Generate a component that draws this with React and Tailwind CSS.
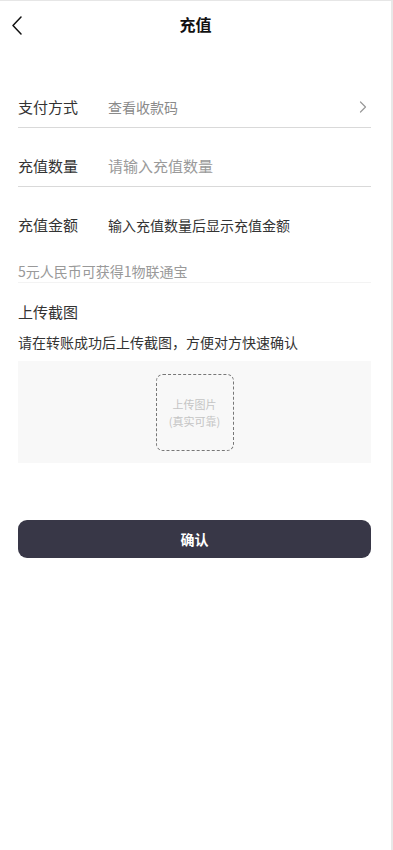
import React from "react";

const font = { fontFamily: '"Noto Sans CJK SC", "Noto Sans", sans-serif' };

function Row({ label, children, right, border = true }) {
  return (
    <div className={`flex items-center h-[20px] pt-[28px] pb-[10px] box-content leading-[20px] ${border ? "border-b border-[#d9d9d9]" : ""}`}>
      <div className="w-[90px] text-[15px] leading-[20px] text-[#333]">{label}</div>
      <div className="flex-1 leading-[20px] flex items-center">{children}</div>
      {right}
    </div>
  );
}

export default function App() {
  return (
    <div className="w-[393px] min-h-[850px] bg-white flex" style={font}>
      <div className="w-[391px] min-h-[850px] border-t border-[#e6e6e6] border-r-2 border-r-[#e8e8e8] box-content">
        <div className="h-[45px] grid grid-cols-[60px_1fr_60px] items-center">
          <div className="pl-[10px] pt-[2px] flex">
            <svg width="14" height="20" viewBox="0 0 14 20" fill="none">
              <path d="M11 2 L3 10.5 L11 19" stroke="#111" strokeWidth="1.5" strokeLinecap="round" strokeLinejoin="round" />
            </svg>
          </div>
          <div className="text-center text-[16px] font-bold text-[#111] leading-[22px]">充值</div>
          <div />
        </div>

        <div className="pl-[18px] pr-[20px] mt-[23px] flex flex-col">
          <Row
            label="支付方式"
            right={
              <svg width="8" height="12" viewBox="0 0 8 12" fill="none" className="mr-[4px]">
                <path d="M1.5 1 L6.5 6 L1.5 11" stroke="#999" strokeWidth="1.2" strokeLinecap="round" strokeLinejoin="round" />
              </svg>
            }
          >
            <span className="text-[14px] text-[#8a8a8a] leading-[20px]">查看收款码</span>
          </Row>
          <Row label="充值数量">
            <span className="text-[15px] text-[#9a9a9a] leading-[20px]">请输入充值数量</span>
          </Row>
          <Row label="充值金额" border={false}>
            <span className="text-[14px] text-[#333] leading-[20px]">输入充值数量后显示充值金额</span>
          </Row>

          <div className="mt-[16px] pb-[1px] border-b border-[#f3f3f3] text-[14px] leading-[20px] text-[#999]">
            5元人民币可获得1物联通宝
          </div>

          <div className="mt-[18px] text-[15px] leading-[22px] text-[#333]">上传截图</div>
          <div className="mt-[9px] text-[14px] leading-[20px] text-[#333]">请在转账成功后上传截图，方便对方快速确认</div>

          <div className="mt-[9px] h-[102px] bg-[#f8f8f8] flex justify-center pt-[13px]">
            <div className="w-[78px] h-[77px] border border-dashed border-[#777] rounded-[7px] flex flex-col items-center justify-center text-[11px] leading-[17px] text-[#c4c4c4]">
              <span>上传图片</span>
              <span>(真实可靠)</span>
            </div>
          </div>

          <button className="mt-[57px] h-[38px] w-full rounded-[9px] bg-[#383747] text-white text-[14px] font-bold">
            确认
          </button>
        </div>
      </div>
    </div>
  );
}
